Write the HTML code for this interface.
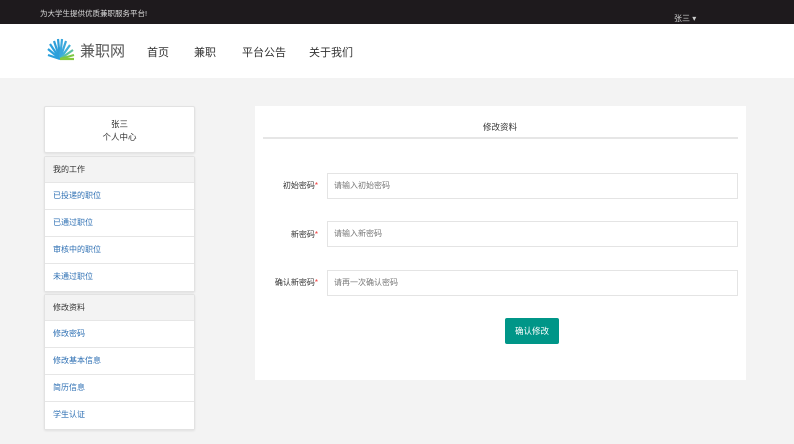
<!DOCTYPE html>
<html><head><meta charset="utf-8"><style>
*{margin:0;padding:0;box-sizing:border-box}
body{width:794px;height:444px;overflow:hidden;background:#f3f3f3;font-family:"Liberation Sans","Noto Sans CJK SC",sans-serif;position:relative}
.top{position:absolute;left:0;top:0;width:794px;height:24px;background:#1e1a1d;color:#ddd;font-size:7.5px}
.hdr{position:absolute;left:0;top:24px;width:794px;height:54px;background:#fff}
.nav{position:absolute;top:44px;font-size:11px;color:#333}
.abs{position:absolute}
.box{position:absolute;left:44px;width:151px;background:#fff;border:1px solid #e2e2e2;border-radius:2px;box-shadow:0 1px 2px rgba(0,0,0,.08)}
.gh{height:26px;line-height:26px;background:#f3f3f3;padding-left:8px;font-size:8px;color:#333;border-bottom:1px solid #e6e6e6}
.it{height:27px;line-height:26px;padding-left:8px;font-size:8px;color:#2d6fb3;border-bottom:1px solid #e6e6e6;background:#fff}
.lbl{position:absolute;font-size:8px;color:#333;text-align:right;width:80px;left:238px}
.lbl b{color:#e33;font-weight:normal}
.inp{position:absolute;left:327px;width:411px;height:26px;border:1px solid #e4e4e4;font-size:8px;color:#777;line-height:24px;padding-left:6px;background:#fff}
</style></head><body>
<div class="top"><span class="abs" style="left:40px;top:8px">为大学生提供优质兼职服务平台!</span><span class="abs" style="left:674px;top:13px;color:#ccc;font-size:8px">张三 ▾</span></div>
<div class="hdr"></div>
<svg class="abs" style="left:46px;top:38px" width="30" height="26" viewBox="0 0 30 26">
<g stroke-width="2.2" stroke-linecap="butt">
<line x1="14" y1="21" x2="2" y2="11" stroke="#2aa0dc"/>
<line x1="14" y1="21" x2="4" y2="6" stroke="#2aa0dc"/>
<line x1="14" y1="21" x2="8" y2="3" stroke="#2f9fd8"/>
<line x1="14" y1="21" x2="12" y2="1" stroke="#2f9fd8"/>
<line x1="14" y1="21" x2="16" y2="1" stroke="#3aa8dc"/>
<line x1="14" y1="21" x2="20" y2="3" stroke="#3aa8dc"/>
<line x1="14" y1="21" x2="24" y2="7" stroke="#40b0d8"/>
<line x1="14" y1="21" x2="27" y2="12" stroke="#5cc0a0"/>
<line x1="14" y1="21" x2="28" y2="17" stroke="#7dc843"/>
<line x1="14" y1="21" x2="2" y2="17" stroke="#2aa0dc"/>
<line x1="14" y1="21" x2="28" y2="21" stroke="#86c93e"/>
</g></svg>
<span class="abs" style="left:80px;top:40px;font-size:15px;color:#555">兼职网</span>
<span class="nav" style="left:147px">首页</span>
<span class="nav" style="left:194px">兼职</span>
<span class="nav" style="left:242px">平台公告</span>
<span class="nav" style="left:309px">关于我们</span>

<div class="box" style="top:106px;height:47px;text-align:center;font-size:8.5px;color:#333;padding-top:11px;line-height:13px">张三<br>个人中心</div>
<div class="box" style="top:156px">
<div class="gh">我的工作</div>
<div class="it">已投递的职位</div><div class="it">已通过职位</div><div class="it">审核中的职位</div><div class="it" style="border-bottom:none">未通过职位</div>
</div>
<div class="box" style="top:294px">
<div class="gh">修改资料</div>
<div class="it">修改密码</div><div class="it">修改基本信息</div><div class="it">简历信息</div><div class="it" style="border-bottom:none">学生认证</div>
</div>

<div class="abs" style="left:255px;top:106px;width:491px;height:274px;background:#fff"></div>
<span class="abs" style="left:483px;top:121px;font-size:8.5px;color:#333">修改资料</span>
<div class="abs" style="left:263px;top:137px;width:475px;height:2px;background:#e6e6e6"></div>
<div class="lbl" style="top:180px">初始密码<b>*</b></div>
<div class="inp" style="top:173px">请输入初始密码</div>
<div class="lbl" style="top:229px">新密码<b>*</b></div>
<div class="inp" style="top:221px">请输入新密码</div>
<div class="lbl" style="top:277px">确认新密码<b>*</b></div>
<div class="inp" style="top:270px">请再一次确认密码</div>
<div class="abs" style="left:505px;top:318px;width:54px;height:26px;background:#009688;border-radius:2px;color:#fff;font-size:8.5px;line-height:26px;text-align:center">确认修改</div>
</body></html>
